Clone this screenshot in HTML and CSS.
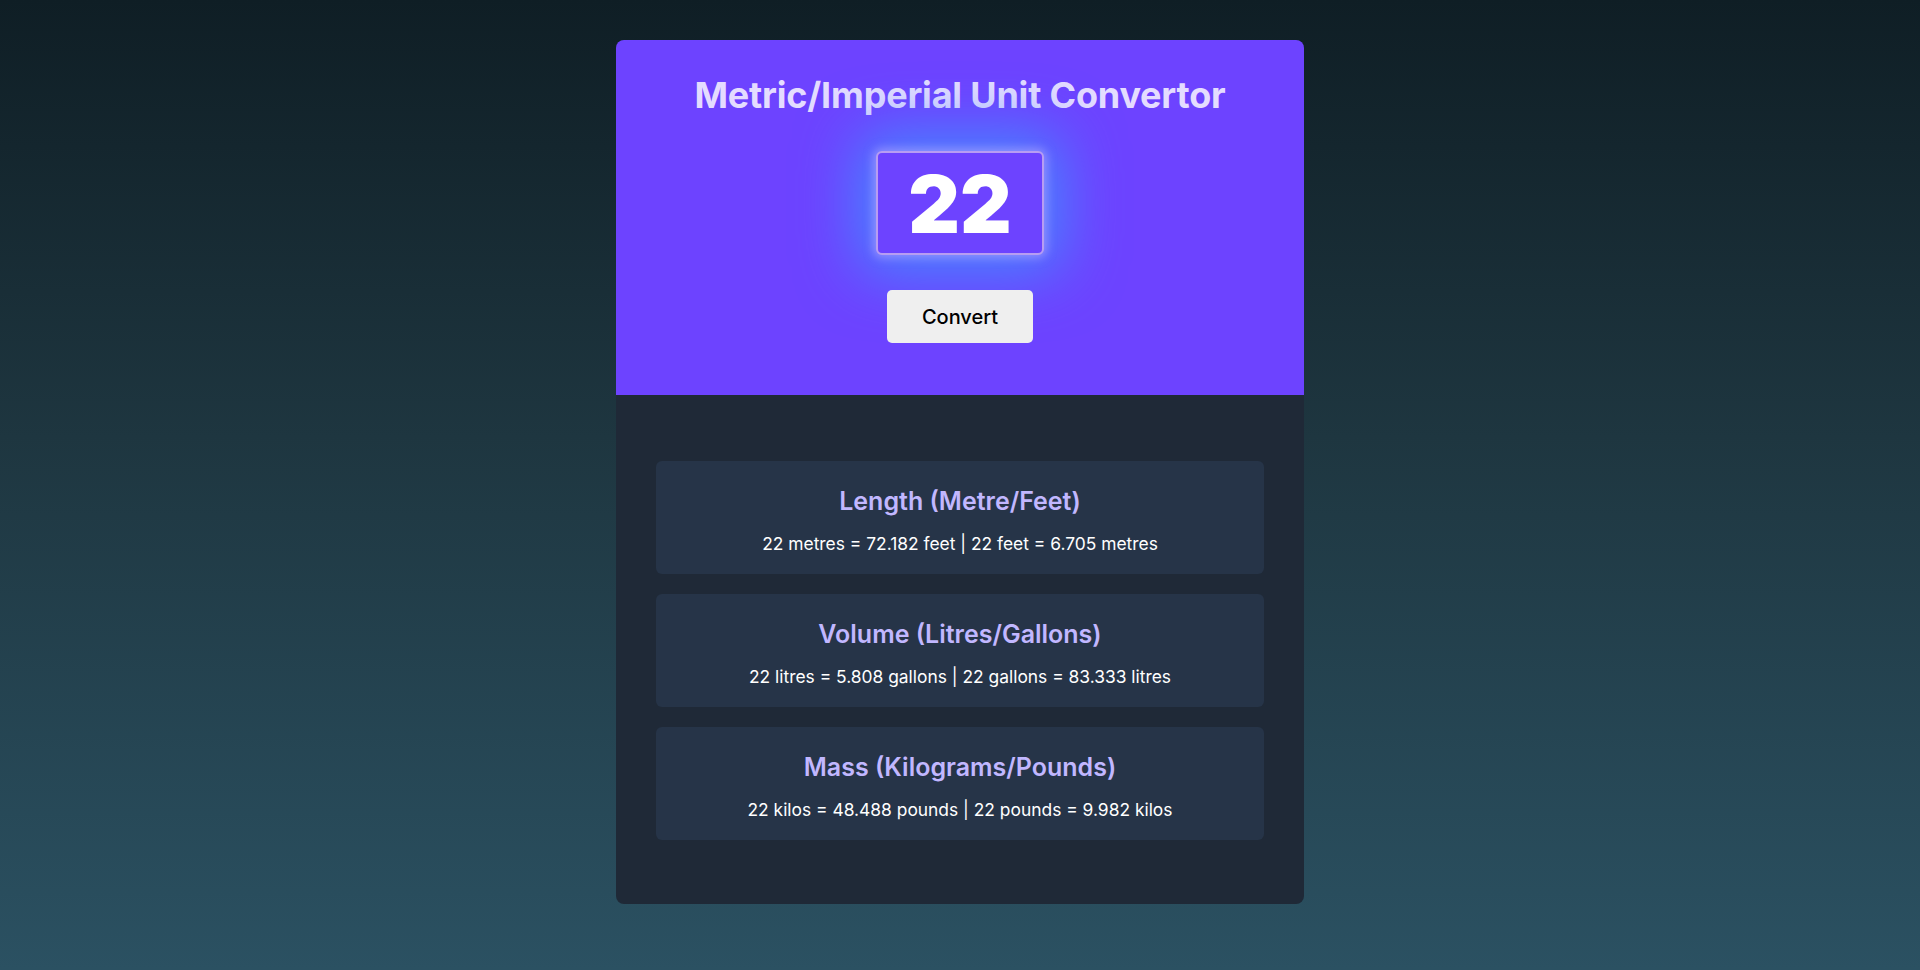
FILE: index.html
```html
<!DOCTYPE html>
<html lang="en">
<head>
<meta charset="utf-8">
<title>Metric/Imperial Unit Convertor</title>
<link rel="stylesheet" href="styles.css">
</head>
<body>
  <main class="app">
    <section class="hero">
      <h1 class="title">Metric/Imperial Unit Convertor</h1>
      <input class="number-input" type="text" value="22" aria-label="Value">
      <button class="convert-btn" type="button">Convert</button>
    </section>
    <section class="results">
      <div class="result-card">
        <h2 class="result-title">Length (Metre/Feet)</h2>
        <p class="result-text">22 metres = 72.182 feet | 22 feet = 6.705 metres</p>
      </div>
      <div class="result-card">
        <h2 class="result-title">Volume (Litres/Gallons)</h2>
        <p class="result-text">22 litres = 5.808 gallons | 22 gallons = 83.333 litres</p>
      </div>
      <div class="result-card">
        <h2 class="result-title">Mass (Kilograms/Pounds)</h2>
        <p class="result-text">22 kilos = 48.488 pounds | 22 pounds = 9.982 kilos</p>
      </div>
    </section>
  </main>
</body>
</html>
```

FILE: styles.css
```css
* { box-sizing: border-box; }

html, body {
  margin: 0;
  height: 100%;
}

body {
  font-family: Inter, "Noto Sans", sans-serif;
  background: linear-gradient(180deg, #0f1e25 0%, #1e3640 45%, #2b5162 100%);
  display: flex;
  justify-content: center;
  padding-top: 40px;
}

.app {
  width: 688px;
  height: 864px;
  border-radius: 8px;
  overflow: hidden;
  background: #1f2937;
  display: flex;
  flex-direction: column;
}

.hero {
  background: #6d43ff;
  display: flex;
  flex-direction: column;
  align-items: center;
  padding: 33px 0 52px;
}

.title {
  margin: 0;
  font-size: 36px;
  font-weight: 700;
  line-height: 44px;
  color: #e4dcff;
  letter-spacing: -0.2px;
}

.number-input {
  margin-top: 34px;
  width: 168px;
  height: 104px;
  border: 2px solid #b79df2;
  border-radius: 6px;
  background: #6d43ff;
  color: #ffffff;
  font-family: Inter, sans-serif;
  font-size: 80px;
  font-weight: 900;
  text-align: center;
  padding: 0;
  outline: none;
  box-shadow: 0 0 10px 3px rgba(205, 175, 255, 0.5), 0 0 60px 18px rgba(70, 135, 255, 1);
}

.convert-btn {
  margin-top: 35px;
  width: 146px;
  height: 53px;
  border: none;
  border-radius: 5px;
  background: #efefef;
  color: #000000;
  font-family: Inter, sans-serif;
  font-size: 20px;
  font-weight: 500;
}

.results {
  flex: 1;
  padding: 66px 40px 64px;
  display: flex;
  flex-direction: column;
  gap: 20px;
}

.result-card {
  height: 113px;
  background: #263448;
  border-radius: 6px;
  display: flex;
  flex-direction: column;
  align-items: center;
  padding-top: 24px;
}

.result-title {
  margin: 0;
  font-size: 25px;
  font-weight: 600;
  line-height: 32px;
  color: #c1b7ff;
}

.result-text {
  margin: 15px 0 0;
  font-size: 17.4px;
  font-weight: 400;
  line-height: 24px;
  color: #ffffff;
}
```
